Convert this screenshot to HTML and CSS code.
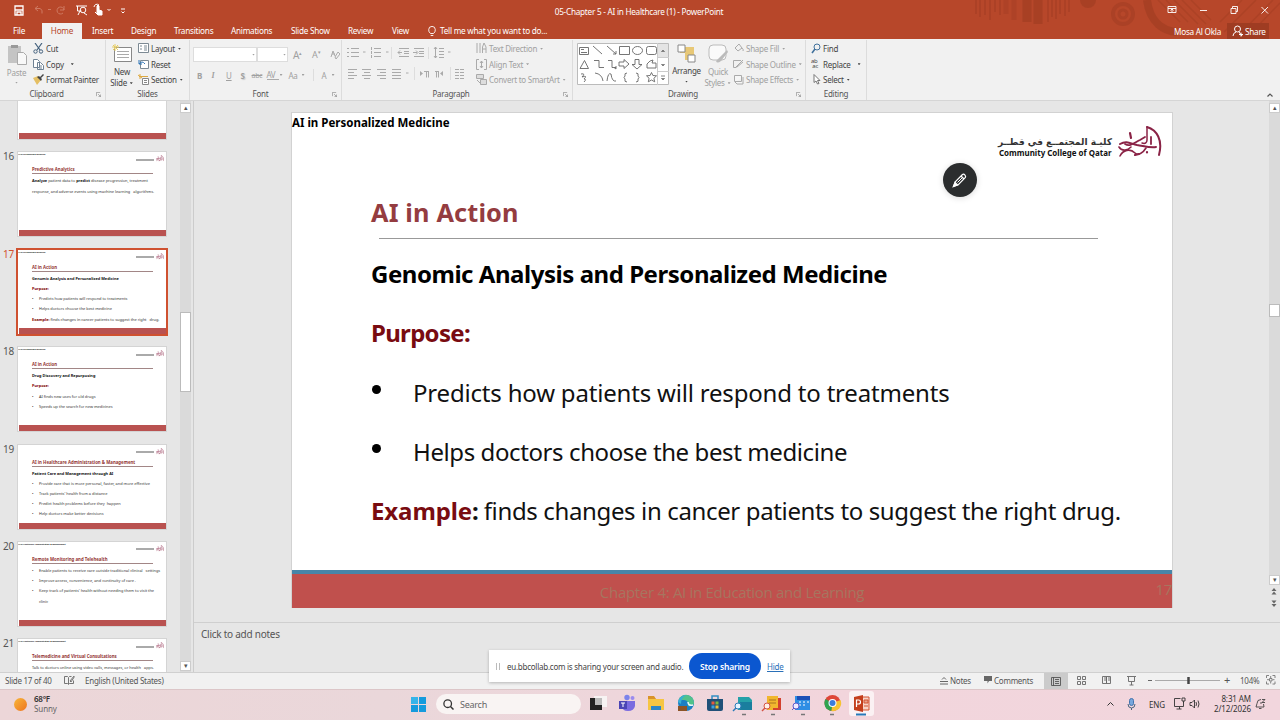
FILE: index.html
```html
<!DOCTYPE html>
<html lang="en">
<head>
  <meta charset="UTF-8">
  <meta name="viewport" content="width=device-width, initial-scale=1.0">
  <title>05-Chapter 5 - AI in Healthcare (1) - PowerPoint</title>
  <link rel="stylesheet" href="styles.css">
</head>
<body>
  <!-- shared symbols -->
  <svg class="defs" width="0" height="0">
    <symbol id="emblem" viewBox="0 0 44 36">
      <g fill="none" stroke="#8a2346" stroke-linecap="round">
        <path d="M29 2c10 3 16 13 12 28" stroke-width="2"/>
        <path d="M29 2v13c0 3-2 4-5 3" stroke-width="1.500"/>
        <path d="M2 19c7-4 11 0 17 1 7 1 13 3 19 2" stroke-width="2"/>
        <path d="M7 19c5 3 9-1 15-4l5-3M33 12v7" stroke-width="1.800"/>
        <path d="M1 22c3 5 9 3 12 0M2 31c3-6 10-8 15-3 3 3 8 0 11-5" stroke-width="1.600"/>
        <path d="M12 8l1 5M29 27v.4M17 30l4-1" stroke-width="2.200"/>
      </g>
    </symbol>
    <symbol id="launch" viewBox="0 0 6 6">
      <path d="M.5 5V.5H5M2.500 2.500l3 3M5.500 3v2.500H3" fill="none" stroke="currentColor" stroke-width=".8"/>
    </symbol>
  </svg>

  <div class="app">
    <header class="header">
      <svg class="header-art" width="360" height="39" viewBox="0 0 360 39">
        <g fill="none" stroke="#9f3c22" stroke-width="1.500">
          <path d="M56 0v14M60 0v17M65 0v15M70 0v20M75 0v12M80 0v15M128 0v22M132 0v17M136 0v19M140 0v14M145 0v16M149 0v12" opacity=".55"/>
          <path d="M86 0v14M94 0v20" stroke-width="5" opacity=".4"/>
          <path d="M107 0v22M118 0v24" stroke-width="9" opacity=".6"/>
          <circle cx="203" cy="14" r="10" stroke-width="4" opacity=".5"/>
          <circle cx="203" cy="14" r="4" stroke-width="3" opacity=".5"/>
          <path d="M227 0c3 24 18 31 30 32" stroke-width="8" opacity=".6"/>
          <path d="M238 0l22 22M246 0l22 22M254 0l24 24M262 0l24 24M271 0l20 20M315 39l38-39M325 39l35-36M304 32l32-32M300 22l22-22" opacity=".45"/>
        </g>
        <circle cx="168" cy="0" r="8" fill="#9f3c22" opacity=".6"/>
      </svg>
      <div class="titlebar">
        <svg width="130" height="20" viewBox="0 0 130 20" fill="none" stroke="#fff">
          <path d="M15 6h8v9h-8zM15 10h8M17 15v-3h4v3" stroke-width="1.300"/>
          <g stroke="#cf7a62"><path d="M38 6l-3 2.500 3 2.500M35 8.500h5q3 1 2 5M64 6v4h-4M64 10a3.500 3.500 0 1 0-1 3M48 9.500h3"/></g>
          <path d="M76 6h11M77.500 6v5h4M80 11l-2 4M84 13l3 2"/><circle cx="83" cy="10" r="2.800"/>
          <path d="M97 14V6q1-2 2 0v4l3 1v4h-4l-3-3z" fill="#fff"/><path d="M94 7a3 3 0 0 1 5-2"/>
          <path d="M107.500 9l1.500 1.500 1.500-1.500M121 9h4M121.500 11.500l1.500 1.500 1.500-1.500"/>
        </svg>
        <span class="doc-title">05-Chapter 5 - AI in Healthcare (1) - PowerPoint</span>
        <svg class="window-btns" width="112" height="20" viewBox="0 0 112 20" fill="none" stroke="#fff">
          <path d="M8 6.500h8v6H8zM8 8.500h8M12 12V9.500M10.500 10.500L12 9l1.500 1.500M40 10.500h7M71 8.500h5v5h-5zM72.500 8V6.500h5v5H76M101.500 7l6.500 6.500M108 7l-6.500 6.500" stroke-width=".9"/>
        </svg>
      </div>
      <nav class="tabs">
        <span class="tab file">File</span>
        <span class="tab active">Home</span>
        <span class="tab insert">Insert</span>
        <span class="tab design">Design</span>
        <span class="tab trans">Transitions</span>
        <span class="tab anim">Animations</span>
        <span class="tab show">Slide Show</span>
        <span class="tab review">Review</span>
        <span class="tab view">View</span>
        <span class="tab tell">
          <svg width="8" height="11" viewBox="0 0 8 11" fill="none" stroke="#fff"><path d="M2.500 7.500Q.5 6 .7 3.700a3.300 3.300 0 0 1 6.600 0Q7.500 6 5.500 7.500zM2.700 9.500h2.600" stroke-width=".9"/></svg>
          Tell me what you want to do...</span>
        <span class="user">Mosa Al Okla</span>
        <span class="share">
          <svg width="11" height="12" viewBox="0 0 11 12" fill="none" stroke="#fff"><circle cx="5.500" cy="4" r="3"/><path d="M1 11q0-3 3-4M7 7l3 4M7 9.500h4M9 7.500v4"/></svg>
          Share</span>
      </nav>
    </header>

    <section class="ribbon">
      <div class="group clipboard">
        <div class="group-body">
          <div class="big disabled paste">
            <svg width="20" height="21" viewBox="0 0 20 21"><path d="M1 2h13v17H1z" fill="#c4c4c4"/><path d="M4 1h7v3H4z" fill="#999"/><path d="M10.500 8.500h6l3 3v9h-9z" fill="#f8f8f8" stroke="#aaa"/></svg>
            <span>Paste</span><i class="caret"></i>
          </div>
          <div class="stack">
            <span class="cmd"><svg width="11" height="11" viewBox="0 0 11 11" fill="none" stroke="#44617d"><path d="M2 0l5 7M9 0L4 7" stroke-width="1.200"/><circle cx="2.500" cy="8.500" r="1.700"/><circle cx="8" cy="8.500" r="1.700"/></svg>Cut</span>
            <span class="cmd"><svg width="11" height="11" viewBox="0 0 11 11" fill="#fff" stroke="#6f8294"><path d="M.5.500h4l2 2v6h-6zM4.500 3.500h3l3 3v4h-6zM6 7h3M6 9h3"/></svg>Copy <i class="caret far"></i></span>
            <span class="cmd"><svg width="11" height="11" viewBox="0 0 11 11"><path d="M0 4l5-2 3 4-4 5z" fill="#e5bf63"/><path d="M4 3l4 4 1-2-3-3zM7 3l3-3 1 1-3 3z" fill="#444"/></svg>Format Painter</span>
          </div>
        </div>
        <div class="group-label">Clipboard<svg class="launch"><use href="#launch"/></svg></div>
      </div>

      <div class="group slides">
        <div class="group-body">
          <div class="big new-slide">
            <svg width="20" height="20" viewBox="0 0 20 20"><path d="M2.500 3.500h17v14h-17z" fill="#fff" stroke="#888"/><path d="M5 7.500h12M5 10.500h12M5 13.500h12" stroke="#aaa"/><path d="M3 0v7M0 3h7M1 1l5 5M6 1L1 6" stroke="#e7cd62"/></svg>
            <span>New</span><span>Slide <i class="caret"></i></span>
          </div>
          <div class="stack">
            <span class="cmd"><svg width="11" height="11" viewBox="0 0 11 11" fill="#fff" stroke="#7d8a94"><path d="M.5.500h10v9H.500zM2 3h2M2 6h2M6 3h3M6 5h3M6 7h3"/></svg>Layout <i class="caret"></i></span>
            <span class="cmd"><svg width="11" height="11" viewBox="0 0 11 11" fill="#fff" stroke="#7d8a94"><path d="M2.500 1.500h8v8h-8z"/><path d="M1 1v4h3M1 5q3-4 6 0" fill="none" stroke="#2e75b6"/></svg>Reset</span>
            <span class="cmd"><svg width="11" height="11" viewBox="0 0 11 11" fill="#fff" stroke="#888"><path d="M4.500 4.500h6v6h-6zM6 6.500h3M6 8.500h3"/><path d="M1 2.500h9M2 0v5M0 1l4 3" stroke="#dda941"/></svg>Section <i class="caret"></i></span>
          </div>
        </div>
        <div class="group-label">Slides</div>
      </div>

      <div class="group font">
        <div class="font-row">
          <span class="combo name"><i class="caret"></i></span><span class="combo size"><i class="caret"></i></span>
          <span class="glyph grow">A<sup>▴</sup></span><span class="glyph shrink">A<sup>▾</sup></span>
          <svg class="clear-fmt" width="10" height="11" viewBox="0 0 10 11" fill="none" stroke="#aaa"><path d="M1 8l2-6 2 5M2 5h3M5 8l3-5 2 2-4 5z"/></svg>
        </div>
        <div class="font-row second">
          <b>B</b><i class="it">I</i><u>U</u><b class="sh">S</b><s>abc</s><span class="av">AV</span><i class="caret"></i><span class="aa">Aa</span><i class="caret"></i><span class="vr"></span><span class="color-a">A</span><i class="caret"></i>
        </div>
        <div class="group-label">Font<svg class="launch"><use href="#launch"/></svg></div>
      </div>

      <div class="group paragraph">
        <div class="group-body">
          <svg class="para-icons" width="126" height="44" viewBox="0 0 126 44" fill="none" stroke="#aaa">
            <path d="M9 5.500h8M9 9.500h8M9 13.500h8M5 5.500h2M5 9.500h2M5 13.500h2M32 5.500h7M32 9.500h7M32 13.500h7M29.500 4v3M29.500 8v3M29.500 12v3"/>
            <path d="M57 5.500h10M62 8.500h5M62 10.500h5M57 13.500h10M56 9.500h4M58 7.500l-2 2 2 2M72 5.500h10M77 8.500h5M77 10.500h5M72 13.500h10M71 9.500h4M74 7.500l2 2-2 2"/>
            <path d="M97 5.500h5M97 8.500h5M97 11.500h5M97 14.500h5M93.500 4v11M92 6l1.500-2L95 6M92 13l1.500 2 1.500-2"/>
            <path d="M6 26.500h9M6 29.500h6M6 32.500h9M6 35.500h6M20 26.500h9M22 29.500h6M20 32.500h9M22 35.500h6M35 26.500h9M38 29.500h6M35 32.500h9M38 35.500h6M50 26.500h9M50 29.500h9M50 32.500h9M50 35.500h9"/>
            <path d="M113 26.500h4M118 26.500h4M113 29.500h4M118 29.500h4M113 32.500h4M118 32.500h4M113 35.500h4M118 35.500h4"/>
            <path d="M72.500 24v13M108.500 24v13M49.500 4v12M86.500 4v12" stroke="#ddd"/>
            <path d="M78 28v5l3-2.500zM101 28v5l-3-2.500z" fill="#aaa" stroke="none"/>
            <path d="M82 28.500h5M84.500 28.500v6M86.500 28.500v6M93 28.500h4M94.500 28.500v6M96.500 28.500v6"/>
            <path d="M21 9h2.500M44 9h2.500M106 9h2.500M64 30h2.500M126 30h2.500"/>
          </svg>
          <div class="stack disabled">
            <span class="cmd"><svg width="11" height="11" viewBox="0 0 11 11" fill="none" stroke="#aaa"><path d="M1 0v10M4 0v10M6.500 10V4l1.500-4 2 4v6M7 6h3"/></svg>Text Direction <i class="caret"></i></span>
            <span class="cmd"><svg width="11" height="11" viewBox="0 0 11 11" fill="none" stroke="#aaa"><path d="M3 .5H.5v10H3M8 .5h2.500v10H8M5.500 2v7M4 4l1.500-2L7 4M4 7l1.500 2L7 7"/></svg>Align Text <i class="caret"></i></span>
            <span class="cmd"><svg width="11" height="11" viewBox="0 0 11 11" fill="#ddd" stroke="#aaa"><path d="M.5.500h7v4h-7zM4.500 5.500h6v5h-6zM1 6l3 3"/></svg>Convert to SmartArt <i class="caret"></i></span>
          </div>
        </div>
        <div class="group-label">Paragraph<svg class="launch"><use href="#launch"/></svg></div>
      </div>

      <div class="group drawing">
        <div class="group-body">
          <svg class="shapes" width="92" height="42" viewBox="0 0 92 42" fill="none" stroke="#666">
            <path d="M.5.500h91v41H.500z" fill="#fff" stroke="#bbb"/>
            <path d="M81 1h10v14H81z" fill="#e4e4e4" stroke="none"/><path d="M80.500 0v42M81 14.500h11M81 28.500h11" stroke="#ccc"/>
            <path d="M2.500 4.500h9v7h-9zM4 6.500h3M4 9.500h6M16 3l9 8M30 3l9 8M39 8v3h-3M42.500 3.500h10v8h-10z" stroke-width=".9"/>
            <rect x="69.500" y="3.500" width="10" height="8" rx="2" stroke-width=".9"/>
            <ellipse cx="60.500" cy="7.500" rx="5" ry="4" stroke-width=".9"/>
            <path d="M3 25.500l4.500-8 4 8zM17 17.500h5v7h5M31 17.500h4v7h4M39 23v3l-2-1.500M42 19h5v-2.500l5 4.500-5 4.500V23h-5zM58 16.500h4v5h3l-5 4.500-5-4.500h3zM70 21l3-3 3-1-1 3h4v5h-9z" stroke-width=".9"/>
            <path d="M4 31q5-1 1 3 6-2 2 2 3 0 0 3M18 30q7 1 8 8M30 38q1-9 4-7 1 8 5 7M50 30q-3 0-2 3l-1 1.500 1 1.500q-1 3 2 3M59 30q3 0 2 3l1 1.500-1 1.500q1 3-2 3M74.500 29.500l1.400 3 3.600.3-2.600 2.500.8 3.500-3.200-1.800-3.200 1.800.8-3.500-2.600-2.500 3.600-.3z" stroke-width=".9"/>
            <path d="M84.500 8.500l1.500-1.500 1.500 1.500zM84.500 21.500l1.500 1.500 1.500-1.500zM84 33h4M84.500 35.500l1.500 1.500 1.500-1.500z" stroke-width=".8"/>
          </svg>
          <div class="big arrange">
            <svg width="20" height="19" viewBox="0 0 20 19"><path d="M3 3h14v13H8V9H3z" fill="#e8c876"/><path d="M1 1h7v7H1zM11 11h7v7h-7z" fill="#fff" stroke="#888"/></svg>
            <span>Arrange</span><i class="caret"></i>
          </div>
          <div class="big quick disabled">
            <svg width="21" height="20" viewBox="0 0 21 20"><rect x="1" y="1" width="17" height="15" rx="4" fill="#fafafa" stroke="#bbb"/><path d="M10 15l9-9 1 2-7 9q-4 3-5 0z" fill="#bbb"/></svg>
            <span>Quick</span><span>Styles <i class="caret"></i></span>
          </div>
          <div class="stack disabled">
            <span class="cmd"><svg width="11" height="11" viewBox="0 0 11 11" fill="none" stroke="#aaa"><path d="M2 5l4-4 3 4-4 3zM9 5q2 2 1 3"/></svg>Shape Fill <i class="caret"></i></span>
            <span class="cmd"><svg width="11" height="11" viewBox="0 0 11 11" fill="none" stroke="#aaa"><path d="M8 1.500H.500v7h3M3 8l7-7M4 8l6-5"/></svg>Shape Outline <i class="caret"></i></span>
            <span class="cmd"><svg width="11" height="11" viewBox="0 0 11 11" fill="#f6f6f6" stroke="#aaa"><path d="M2 8l2 2h6V3M1.500 1.500h7v6h-7z"/></svg>Shape Effects <i class="caret"></i></span>
          </div>
        </div>
        <div class="group-label">Drawing<svg class="launch"><use href="#launch"/></svg></div>
      </div>

      <div class="group editing">
        <div class="group-body">
          <div class="stack">
            <span class="cmd"><svg width="10" height="11" viewBox="0 0 10 11" fill="none" stroke="#41719c"><circle cx="6" cy="4" r="3"/><path d="M4 6L1 10" stroke-width="1.500"/></svg>Find</span>
            <span class="cmd"><span class="abac">ab<br>&nbsp;ac</span>Replace <i class="caret far"></i></span>
            <span class="cmd"><svg width="10" height="11" viewBox="0 0 10 11" fill="#fff" stroke="#777"><path d="M3 .5v8l2-1.500 1.500 3L8 9.500l-1.500-3H9z"/></svg>Select <i class="caret"></i></span>
          </div>
        </div>
        <div class="group-label">Editing</div>
      </div>
      <svg class="collapse" width="8" height="6" viewBox="0 0 8 6" fill="none" stroke="#555"><path d="M1.500 4.500L4 2l2.500 2.500" stroke-width="1.200"/></svg>
    </section>

    <main class="workspace">
      <aside class="thumbs">
        <div class="thumb-list">
          <div class="item"><span class="num"></span><div class="thumb"><div class="bar"></div></div></div>
          <div class="item"><span class="num">16</span><div class="thumb">
            <div class="mini-head"><b>AI in Personalized Medicine</b><span class="mini-logo"><i></i><svg><use href="#emblem"/></svg></span></div>
            <div class="mini-title">Predictive Analytics</div>
            <div class="mini-body"><p><b>Analyze</b> patient data to <b>predict</b> disease progression, treatment</p><p>response, and adverse events using machine learning &nbsp; algorithms.</p></div>
            <div class="bar"></div></div></div>
          <div class="item"><span class="num sel">17</span><div class="thumb selected">
            <div class="mini-head"><b>AI in Personalized Medicine</b><span class="mini-logo"><i></i><svg><use href="#emblem"/></svg></span></div>
            <div class="mini-title">AI in Action</div>
            <div class="mini-body"><p><b>Genomic Analysis and Personalized Medicine</b></p><p><b class="red">Purpose:</b></p><p class="li">Predicts how patients will respond to treatments</p><p class="li">Helps doctors choose the best medicine</p><p><b class="red">Example:</b> finds changes in cancer patients to suggest the right &nbsp; drug.</p></div>
            <div class="bar"></div></div></div>
          <div class="item"><span class="num">18</span><div class="thumb">
            <div class="mini-head"><b>AI in Personalized Medicine</b><span class="mini-logo"><i></i><svg><use href="#emblem"/></svg></span></div>
            <div class="mini-title">AI in Action</div>
            <div class="mini-body"><p><b>Drug Discovery and Repurposing</b></p><p><b class="red">Purpose:</b></p><p class="li">AI finds new uses for old drugs</p><p class="li">Speeds up the search for new medicines</p></div>
            <div class="bar"></div></div></div>
          <div class="item"><span class="num">19</span><div class="thumb">
            <div class="mini-head"><b></b><span class="mini-logo"><i></i><svg><use href="#emblem"/></svg></span></div>
            <div class="mini-title">AI in Healthcare Administration &amp; Management</div>
            <div class="mini-body"><p><b>Patient Care and Management through AI</b></p><p class="li">Provide care that is more personal, faster, and more effective</p><p class="li">Track patients' health from a distance</p><p class="li">Predict health problems before they &nbsp;happen</p><p class="li">Help doctors make better decisions</p></div>
            <div class="bar"></div></div></div>
          <div class="item"><span class="num">20</span><div class="thumb">
            <div class="mini-head"><b>AI in Healthcare Administration &amp; Management</b><span class="mini-logo"><i></i><svg><use href="#emblem"/></svg></span></div>
            <div class="mini-title">Remote Monitoring and Telehealth</div>
            <div class="mini-body"><p class="li">Enable patients to receive care outside traditional clinical &nbsp; settings</p><p class="li">Improve access, convenience, and continuity of care .</p><p class="li">Keep track of patients' health without needing them to visit the</p><p class="li cont">clinic</p></div>
            <div class="bar"></div></div></div>
          <div class="item"><span class="num">21</span><div class="thumb">
            <div class="mini-head"><b>AI in Healthcare Administration &amp; Management</b><span class="mini-logo"><i></i><svg><use href="#emblem"/></svg></span></div>
            <div class="mini-title">Telemedicine and Virtual Consultations</div>
            <div class="mini-body"><p>Talk to doctors online using video calls, messages, or health &nbsp; apps.</p></div>
            <div class="bar"></div></div></div>
        </div>
        <div class="scrollbar">
          <span class="sb-btn">▴</span><span class="sb-thumb"></span><span class="sb-btn last">▾</span>
        </div>
      </aside>

      <section class="editor">
        <div class="canvas">
          <article class="slide">
            <div class="slide-head">
              <span class="corner">AI in Personalized Medicine</span>
              <div class="logo">
                <div class="logo-text"><span class="ar" lang="ar" dir="rtl">كليـة المجتمــع في قطــر</span><span class="en">Community College of Qatar</span></div>
                <svg width="44" height="36"><use href="#emblem"/></svg>
              </div>
            </div>
            <h1>AI in Action</h1>
            <div class="slide-body">
              <p class="topic">Genomic Analysis and Personalized Medicine</p>
              <p class="purpose">Purpose:</p>
              <p class="bullet one">Predicts how patients will respond to treatments</p>
              <p class="bullet two">Helps doctors choose the best medicine</p>
              <p class="example"><b>Example</b><strong>:</strong> finds changes in cancer patients to suggest the right drug.</p>
            </div>
            <footer class="slide-foot"><span>Chapter 4: AI in Education and Learning</span><span class="page">17</span></footer>
          </article>
          <div class="scrollbar main-sb">
            <span class="sb-btn">▴</span><span class="sb-thumb"></span><span class="sb-btn last">▾</span>
            <svg width="10" height="28" viewBox="0 0 10 28" fill="#666"><path d="M5 3L2.500 6h5zM5 6.500L2.500 9.500h5zM5 22l-2.500-3h5zM5 18.500l-2.500-3h5z"/></svg>
          </div>
        </div>
        <div class="notes">Click to add notes</div>
      </section>
      <button class="pen" aria-label="Pen"><svg width="16" height="16" viewBox="0 0 16 16" fill="none" stroke="#fff"><path d="M1.500 14.500l2-5L10.500 2.500q1-1 2.300.4t.6 2.500L6.500 12.500z" stroke-width="1.200"/><path d="M1.500 14.500l1.500-4 2.500 2.500zM9 4l3 3" fill="#fff" stroke-width="1.300"/><path d="M5.500 10.500L10 6"/></svg></button>
    </main>

    <div class="statusbar">
      <span class="count">Slide 17 of 40</span>
      <svg class="spell" width="11" height="10" viewBox="0 0 11 10" fill="none" stroke="#666"><path d="M.5 1.500h3l1 1 1-1h2M.5 1.500v7h3l1 1 1-1h4v-3M4.500 3v6M6 6l4-5M6 6l1 1 3.500-5.500" stroke-width=".9"/></svg>
      <span class="lang">English (United States)</span>
      <span class="notes-btn"><svg width="8" height="9" viewBox="0 0 8 9" fill="none" stroke="#666"><path d="M0 5.500h8M0 8h8M2 3.500l2-2 2 2"/></svg>Notes</span>
      <span class="comments-btn"><svg width="8" height="8" viewBox="0 0 8 8" fill="#666"><path d="M0 0h8v5H5L3.500 7.500V5H0z"/></svg>Comments</span>
      <span class="view-on"><svg width="10" height="9" viewBox="0 0 10 9" fill="none" stroke="#555"><path d="M.5.500h9v8h-9zM2.500 0v9M4 2.500h4M4 4.500h4M4 6.500h4" stroke-width=".9"/></svg></span>
      <svg width="152" height="15" viewBox="0 0 152 15" fill="none" stroke="#666">
        <path d="M9.500 3.500h3v3h-3zM14.500 3.500h3v3h-3zM9.500 8.500h3v3h-3zM14.500 8.500h3v3h-3zM34.500 3.500h4v7h-4zM38.500 3.500h4v7h-4zM36 5h2M36 7h2M40 5h2M40 7h2M59 3.500h9M60.500 4v4.500h6V4M63.500 9v3M61.500 12h4" stroke-width=".9"/>
        <path d="M80 7.500h4"/><path d="M87 7.500h65" stroke="#aaa"/><path d="M120.500 4v7" stroke="#444" stroke-width="2.500"/>
      </svg>
      <span class="plus">+</span>
      <span class="zoom">104%</span>
      <svg width="10" height="10" viewBox="0 0 10 10" fill="none" stroke="#777"><path d="M.5 3V.5H3M6.500.500H9V3M9 6.500V9H6.500M3 9H.5V6.500M4.700 1v2M4.700 6.500v2M1 4.700h2M6.500 4.700h2M3.500 3.500h2.500v2.500H3.500z" stroke-width=".9"/></svg>
    </div>

    <footer class="taskbar">
      <span class="sun"></span>
      <div class="weather"><b>68°F</b><span>Sunny</span></div>
      <div class="dock">
        <svg class="win" width="17" height="17" viewBox="0 0 17 17"><path d="M1 1h7v7H1zM9 1h7v7H9zM1 9h7v7H1zM9 9h7v7H9z" fill="#159bdd"/><path d="M1 1h7v7H1z" fill="#35b4e9"/></svg>
        <div class="search"><svg width="11" height="11" viewBox="0 0 11 11" fill="none" stroke="#333"><circle cx="4.700" cy="4.700" r="3.800" stroke-width="1.300"/><path d="M7.500 7.500l3 3" stroke-width="1.500"/></svg>Search</div>
        <svg class="apps" width="286" height="30" viewBox="0 0 286 30">
          <!-- task view -->
          <path d="M5 7h13v11H5z" fill="#f7f3f3"/><path d="M1 9h5v7h7v5H1z" fill="#222"/><path d="M6 9h7v7H6z" fill="#bbb"/>
          <!-- teams -->
          <circle cx="38" cy="8.500" r="2.700" fill="#7b83eb"/><circle cx="43.500" cy="9" r="2" fill="#9b8bef"/><path d="M34 12h12v5q-1 5-7 5t-5-4z" fill="#7a6be0"/><path d="M30 12h8v8h-8z" fill="#4b45b5"/><path d="M32 14h4M34 14v4" stroke="#fff"/>
          <!-- explorer -->
          <path d="M59 8h6l2 2h8v11H59z" fill="#f6c544"/><path d="M59 7h6l2 3h-8z" fill="#d9932a"/><path d="M62 17h10v4H62z" fill="#2d86c9"/>
          <!-- edge -->
          <circle cx="97" cy="14" r="8" fill="#1b7fc4"/><path d="M89.500 11a8 8 0 0 1 15.500 3q-1 4-6 3 1-6-4-6-4 0-5.500 0z" fill="#52c28b"/><path d="M89 13q2-7 9-7-6 2-6 9z" fill="#36b0d8"/><path d="M89 17h9v5H89z" fill="#8c5427"/><path d="M99 13q0 4 5 3" stroke="#e9f7fa" stroke-width="1.500" fill="none"/>
          <!-- store -->
          <path d="M118 10h16v10q0 2-2 2h-12q-2 0-2-2z" fill="#205078"/><path d="M123 10V7h6v3" fill="none" stroke="#338fc4" stroke-width="1.500"/><path d="M122.500 12.500h3v3h-3z" fill="#e85a3b"/><path d="M126.500 12.500h3v3h-3z" fill="#7bb942"/><path d="M122.500 16.500h3v3h-3z" fill="#3aa1dd"/><path d="M126.500 16.500h3v3h-3z" fill="#f0c23b"/>
          <!-- magnified shortcuts -->
          <path d="M149 8h11l3 3v10h-14z" fill="#25a1a9"/><path d="M151 13h12v8h-12z" fill="#1a7e9e"/><circle cx="149" cy="17" r="3" fill="#e4f4ff" stroke="#287bb8"/><path d="M147 19l-3 3" stroke="#287bb8" stroke-width="1.500"/>
          <path d="M178 7h11v14h-11z" fill="#f1b62e"/><path d="M189 9h3v12h-8v-2h5z" fill="#d3402e"/><path d="M180 11h7M180 14h7" stroke="#aa731e"/><circle cx="178" cy="17" r="3" fill="#fff0e8" stroke="#d45344"/><path d="M176 19l-3 3" stroke="#d45344" stroke-width="1.500"/>
          <path d="M206 7h15v14h-15z" fill="#2e8ee4"/><path d="M208 7h13v4h-13z" fill="#1c50b6"/><path d="M210 13h2M214 13h2M218 13h2M210 16h2M214 16h2" stroke="#fff"/><circle cx="207" cy="17" r="3" fill="#eeeaff" stroke="#5d5acb"/><path d="M205 19l-2 2" stroke="#5d5acb"/>
          <!-- chrome -->
          <circle cx="243.500" cy="14" r="8" fill="#de4537"/><path d="M243.500 14l-7-4a8 8 0 0 0 6 12z" fill="#30a350"/><path d="M243.500 14l8-3a8 8 0 0 1-9 11z" fill="#f6c331"/><circle cx="243.500" cy="14" r="4" fill="#fff"/><circle cx="243.500" cy="14" r="3" fill="#3c7ddc"/>
          <!-- powerpoint -->
          <rect x="260" y="2" width="25" height="25" rx="3" fill="#fbf1f3"/><path d="M271 8h9v13h-9z" fill="#f7d3c8" stroke="#d35230"/><path d="M275 11h4v3h-4zM275 17h4" stroke="#d35230" fill="#e9a18d"/><path d="M265 8l9-2v17l-9-2z" fill="#c43e1c"/><path d="M267.500 18v-7h2q2 0 2 2t-2 2h-2" fill="none" stroke="#fff" stroke-width="1.200"/>
          <path d="M153 25.500h4M182 25.500h4M212 25.500h4M241 25.500h4" stroke="#777" stroke-width="1.500"/><path d="M267 25.500h10" stroke="#2878b8" stroke-width="2"/>
        </svg>
      </div>
      <div class="tray">
        <svg width="36" height="16" viewBox="0 0 36 16" fill="none" stroke="#333"><path d="M1.500 9.500L4.500 6.500l3 3"/><rect x="23.500" y="2.500" width="4" height="7" rx="2" fill="#77a6dc" stroke="#4173ad"/><path d="M22 8q0 4 3.500 4T29 8M25.500 12v2" stroke="#4b647e"/></svg>
        <span class="eng">ENG</span>
        <svg width="28" height="14" viewBox="0 0 28 14" fill="none" stroke="#333"><path d="M7.500 1.500h-6v8h9V5M3.500 12h5M6.500 10v2M9 1h3v3H9zM10.500 4v2M17 5.500h2l2.500-2.500v8L19 8.500h-2zM23 5q1 2 0 4M25 3.500q2 3.500 0 7" stroke-width=".9"/></svg>
        <div class="clock"><span>8:31 AM</span><span>2/12/2026</span></div>
        <svg width="11" height="12" viewBox="0 0 11 12" fill="none" stroke="#444"><path d="M6 1.500q-4 0-4 4L1 9h8L8.500 6M4 10.500h2.500M7 1.500h3l-3 3h3M5 5h2" stroke-width=".9"/></svg>
      </div>
    </footer>

    <div class="share-bar">
      <span class="grip"></span>
      <span class="msg">eu.bbcollab.com is sharing your screen and audio.</span>
      <button class="stop">Stop sharing</button>
      <a class="hide">Hide</a>
    </div>
  </div>
</body>
</html>
```

FILE: styles.css
```css
* {
  box-sizing: border-box;
}
body {
  margin: 0;
  font-family: "Noto Sans", "Open Sans", sans-serif;
  font-size: 8px;
  letter-spacing: -0.25px;
  color: #444;
}
p, h1 {
  margin: 0;
}
svg {
  flex: none;
}
.defs {
  position: absolute;
}
.app {
  position: relative;
  width: 1280px;
  height: 720px;
  display: flex;
  flex-direction: column;
  overflow: hidden;
  background: #e6e6e6;
  white-space: nowrap;
}

/* header */
.header {
  position: relative;
  height: 39px;
  background: #b7472a;
  color: #fff;
}
.header-art {
  position: absolute;
  right: 0;
  top: 0;
}
.titlebar {
  position: relative;
  height: 23px;
  display: flex;
  align-items: center;
  justify-content: space-between;
}
.titlebar > svg {
  margin-top: -3px;
}
.titlebar > svg:first-child {
  margin-right: -12px;
}
.doc-title {
  font-size: 8.2px;
}
.titlebar .window-btns {
  margin-right: 8px;
}
.tabs {
  position: relative;
  height: 16px;
  display: flex;
  align-items: center;
  font-size: 8.2px;
}
.tab {
  flex: none;
  line-height: 16px;
}
.file { width: 42px; padding-left: 13px; }
.active {
  width: 40px;
  text-align: center;
  background: #f1f1f1;
  color: #b7472a;
}
.insert { width: 49px; padding-left: 10px; }
.design { width: 43px; }
.trans { width: 57px; }
.anim { width: 60px; }
.show { width: 57px; }
.review { width: 44px; }
.view { width: 36px; }
.tell {
  display: flex;
  align-items: center;
  gap: 4px;
}
.user {
  margin-left: auto;
  width: 53px;
}
.share {
  display: flex;
  align-items: center;
  gap: 2px;
  width: 42px;
  height: 16px;
  margin-right: 11px;
  padding-left: 5px;
  background: #9f3c22;
}

/* ribbon */
.ribbon {
  position: relative;
  height: 62px;
  display: flex;
  background: #f1f1f1;
  border-bottom: 1px solid #d5d5d5;
}
.group {
  flex: none;
  height: 60px;
  margin-top: 1px;
  display: flex;
  flex-direction: column;
  border-right: 1px solid #dcdcdc;
}
.clipboard { width: 106px; }
.slides { width: 84px; }
.font { width: 152px; }
.paragraph { width: 231px; }
.drawing { width: 233px; }
.editing { width: 61px; }
.group-body {
  height: 48px;
  padding-top: 1px;
  display: flex;
}
.group-label {
  position: relative;
  height: 12px;
  line-height: 12px;
  text-align: center;
  color: #555;
  margin-top: auto;
}
.clipboard .group-label { padding-right: 12px; }
.paragraph .group-label { padding-right: 12px; }
.drawing .group-label { padding-right: 12px; }
.font .group-label { padding-right: 10px; }
.launch {
  position: absolute;
  right: 4px;
  top: 4px;
  width: 5px;
  height: 5px;
  color: #888;
}
.stack {
  display: flex;
  flex-direction: column;
}
.cmd {
  height: 15.5px;
  display: flex;
  align-items: center;
  gap: 2px;
}
.caret {
  display: inline-block;
  width: 3px;
  height: 2px;
  margin: 0 1px;
  vertical-align: middle;
  background: currentColor;
  clip-path: polygon(0 0, 100% 0, 50% 100%);
}
.caret.far {
  margin-left: 5px;
}
.disabled {
  color: #a0a0a0;
}
.big {
  display: flex;
  flex-direction: column;
  align-items: center;
  line-height: 10.500px;
}
.big svg {
  margin: 3px 0 3px;
}
.paste { width: 33px; }
.paste .caret { margin-top: 3px; }
.new-slide { width: 32px; }
.arrange { width: 34px; padding-left: 1px; }
.arrange .caret { margin-top: 4px; }
.quick { width: 30px; }
.font-row {
  display: flex;
  align-items: center;
  height: 17px;
  padding-left: 3px;
  margin-top: 6px;
  color: #a0a0a0;
}
.font-row.second {
  padding-left: 7px;
  height: 18px;
  margin-top: 3px;
}
.combo {
  height: 15px;
  background: #fff;
  border: 1px solid #ddd;
  display: flex;
  align-items: center;
  justify-content: flex-end;
}
.combo.name { width: 64px; }
.combo.size { width: 31px; }
.glyph {
  font-size: 10px;
  width: 15px;
  margin-left: 5px;
  margin-right: -4px;
}
.glyph sup {
  font-size: 5px;
}
.shrink { font-size: 9px; margin-left: 8px; }
.clear-fmt { margin-left: 7px; }
.second > * { flex: none; }
.second b, .second u, .it { width: 14.500px; }
.second .sh { width: 11px; text-shadow: 1px 1px 1px #ccc; }
.it { font-family: "Liberation Serif", serif; font-weight: bold; }
.second s { width: 15px; font-size: 7px; }
.second .av { width: 12px; font-size: 8px; letter-spacing: -0.5px; border-bottom: 1px solid #aaa; line-height: 9px; }
.second .aa { width: 12px; margin-left: 5px; }
.vr { width: 1px; height: 12px; background: #ddd; margin: 0 8px 0 7px; }
.color-a { width: 9px; }
.para-icons { margin-top: 2px; }
.paragraph .group-body { gap: 8px; }
.drawing .group-body { padding-left: 4px; }
.shapes { margin-top: 2px; }
.editing .cmd { padding-left: 5px; }
.abac {
  width: 10px;
  font-size: 6px;
  line-height: 5.500px;
}
.collapse {
  position: absolute;
  right: 6px;
  bottom: 2px;
}

/* slide list */
.workspace {
  position: relative;
  height: 571px;
  display: flex;
}
.thumbs {
  width: 194px;
  display: flex;
  border-right: 1px solid #ccc;
}
.thumb-list {
  width: 180px;
  height: 571px;
  overflow: hidden;
}
.thumb-list .item:first-child {
  margin-top: -46px;
}
.item {
  display: flex;
  height: 84px;
  margin-bottom: 13.400px;
}
.num {
  width: 18px;
  padding-left: 3px;
  font-size: 10px;
  line-height: 8px;
  color: #555;
}
.num.sel {
  color: #d35230;
}
.thumb {
  position: relative;
  width: 148px;
  height: 84px;
  display: flex;
  flex-direction: column;
  overflow: hidden;
  background: #fff;
  font-size: 3.9px;
  letter-spacing: 0;
  outline: 1px solid #d4d4d4;
}
.selected {
  outline: 2px solid #cf5130;
}
.mini-head {
  height: 13px;
  display: flex;
  justify-content: space-between;
  line-height: 5px;
  font-size: 2px;
  color: #111;
  padding-right: 2px;
}
.mini-logo {
  display: flex;
  align-items: center;
  gap: 2px;
}
.mini-logo i {
  width: 18px;
  height: 2px;
  border: solid #aaa;
  border-width: 1px 0;
  margin-top: 2px;
}
.mini-logo svg {
  width: 8px;
  height: 7px;
}
.mini-title {
  height: 9px;
  width: 121px;
  margin-left: 14px;
  line-height: 8px;
  font-size: 4.350px;
  font-weight: bold;
  color: #943634;
  border-bottom: 1px solid #a28686;
}
.mini-body {
  padding: 2px 0 0 14px;
  line-height: 10.200px;
  color: #333;
}
.mini-body b {
  color: #111;
}
.mini-body .red {
  color: #800000;
}
.li::before {
  content: "•";
  display: inline-block;
  width: 7px;
}
.li.cont::before {
  content: "";
}
.bar {
  height: 6px;
  margin: auto 0 0 1px;
  background: #b95250;
}
.scrollbar {
  width: 11px;
  padding: 2px 0 1px;
  display: flex;
  flex-direction: column;
  background: #dadada;
}
.sb-btn {
  height: 10px;
  border: 1px solid #ccc;
  background: #fff;
  color: #555;
  font-size: 7px;
  line-height: 8px;
  text-align: center;
}
.sb-btn.last {
  margin-top: auto;
}
.sb-thumb {
  height: 80px;
  margin-top: 199px;
  background: #fff;
  border: 1px solid #bbb;
}

/* slide editor */
.editor {
  flex: 1;
  display: flex;
  flex-direction: column;
}
.canvas {
  height: 522px;
  display: flex;
  justify-content: space-between;
  border-bottom: 1px solid #cfcfcf;
}
.slide {
  width: 882px;
  height: 496px;
  margin: 11px 0 0 97px;
  display: flex;
  flex-direction: column;
  background: #fff;
  border: 1px solid #d2d2d2;
  border-bottom: 0;
  color: #111;
}
.slide-head {
  height: 71px;
  display: flex;
  justify-content: space-between;
}
.corner {
  font-size: 11.5px;
  font-weight: bold;
  line-height: 20px;
  letter-spacing: 0;
  color: #000;
}
.logo {
  display: flex;
  gap: 6px;
  padding: 12px 10px 0 0;
}
.logo-text {
  width: 113px;
  padding-top: 10px;
  display: flex;
  flex-direction: column;
  letter-spacing: 0;
}
.logo .ar {
  font-family: "DejaVu Sans", sans-serif;
  font-size: 9.1px;
  font-weight: bold;
  line-height: 14px;
  color: #333;
}
.logo .en {
  font-size: 7.950px;
  font-weight: bold;
  line-height: 9px;
}
.slide h1 {
  height: 55px;
  width: 719px;
  margin-left: 87px;
  text-indent: -8px;
  line-height: 56px;
  font-size: 25.3px;
  letter-spacing: 0.15px;
  color: #943c40;
  border-bottom: 1px solid #999;
}
.slide-body {
  padding: 5px 0 0 79px;
  font-size: 24px;
  line-height: 59.300px;
}
.topic, .purpose {
  font-weight: bold;
  color: #000;
}
.topic { letter-spacing: -0.46px; }
.purpose { letter-spacing: -0.7px; }
.one { letter-spacing: -0.19px; }
.two { letter-spacing: -0.4px; }
.example { letter-spacing: -0.36px; }
.example b { letter-spacing: -0.1px; }
.example strong { letter-spacing: -1px; }
.purpose, .example b {
  color: #790b10;
}
.bullet {
  display: flex;
  align-items: center;
}
.bullet::before {
  content: "";
  width: 9px;
  height: 9px;
  margin: -6px 32px 0 1px;
  border-radius: 50%;
  background: #000;
}
.slide-foot {
  height: 38px;
  margin-top: auto;
  padding-top: 2px;
  display: flex;
  justify-content: center;
  position: relative;
  background: #c0504d;
  border-top: 4px solid #4785a8;
  font-family: "Open Sans", sans-serif;
  font-size: 15px;
  line-height: 32px;
  letter-spacing: -0.3px;
  color: #a7755f;
}
.page {
  position: absolute;
  right: 0;
  top: -1px;
}
.main-sb {
  width: 11px;
}
.main-sb .sb-thumb {
  height: 13px;
  margin-top: 191px;
}
.main-sb svg {
  margin-bottom: 8px;
}
.main-sb {
  margin-bottom: 0;
  background: linear-gradient(#dadada 484px, #e6e6e6 484px);
}
.notes {
  height: 49px;
  padding: 4px 0 0 7px;
  font-size: 10px;
  line-height: 14px;
  color: #555;
}
.pen {
  position: absolute;
  left: 943px;
  top: 62px;
  width: 34px;
  height: 34px;
  padding: 0;
  border: 0;
  border-radius: 50%;
  display: flex;
  align-items: center;
  justify-content: center;
  background: #2b2d2e;
  box-shadow: 0 1px 6px rgba(0, 0, 0, 0.15);
}

/* status bar */
.statusbar {
  height: 17px;
  display: flex;
  align-items: center;
  padding-bottom: 2px;
  background: #f1f1f1;
  border-top: 1px solid #d0d0d0;
  color: #555;
}
.count { width: 58px; padding-left: 5px; }
.spell { margin: 0 10px 0 6px; }
.lang { width: 100px; }
.notes-btn, .comments-btn {
  display: flex;
  align-items: center;
  gap: 2px;
}
.notes-btn { margin-left: auto; width: 44px; }
.comments-btn { width: 60px; }
.view-on {
  width: 24px;
  height: 16px;
  margin-bottom: -2px;
  display: flex;
  align-items: center;
  justify-content: center;
  background: #cbcbcb;
}
.plus { width: 20px; padding-left: 4px; font-size: 11px; line-height: 14px; }
.zoom { width: 26px; }
.statusbar > svg:last-child { margin-right: 4px; }

/* taskbar */
.taskbar {
  position: relative;
  height: 31px;
  display: flex;
  align-items: center;
  padding-bottom: 2px;
  background: linear-gradient(90deg, #ecd6d8, #ead7da 30%, #f2d5dc 65%, #f2d6dd);
  border-top: 1px solid #dcc6c8;
}
.sun {
  width: 13px;
  height: 13px;
  margin: 0 7px 0 14px;
  border-radius: 50%;
  background: linear-gradient(135deg, #f8b739, #ee7420);
}
.weather {
  display: flex;
  flex-direction: column;
  line-height: 10.500px;
}
.weather b { font-weight: 600; color: #333; }
.weather span { color: #666; letter-spacing: -0.1px; }
.dock {
  position: absolute;
  left: 410px;
  top: -1px;
  display: flex;
  align-items: center;
}
.search {
  display: flex;
  align-items: center;
  gap: 6px;
  width: 145px;
  height: 20px;
  margin: 0 8px 0 9px;
  padding-left: 7px;
  border-radius: 10px;
  background: #f9f4f3;
  font-size: 9px;
  color: #666;
}
.tray {
  margin-left: auto;
  display: flex;
  align-items: center;
  color: #333;
}
.eng { width: 31px; padding-left: 7px; letter-spacing: -0.1px; }
.clock {
  width: 50px;
  display: flex;
  flex-direction: column;
  text-align: right;
  line-height: 10.500px;
  letter-spacing: -0.1px;
}
.tray > svg:last-child { margin: 0 14px 0 4px; }

/* screen share notice */
.share-bar {
  position: absolute;
  left: 489px;
  top: 650px;
  width: 301px;
  height: 32px;
  display: flex;
  align-items: center;
  background: #fff;
  box-shadow: 0 1px 3px rgba(0, 0, 0, 0.25);
}
.grip {
  width: 4px;
  height: 7px;
  margin: 0 7px;
  border: solid #bbb;
  border-width: 0 1px;
}
.msg {
  width: 182px;
}
.stop {
  width: 72px;
  height: 26px;
  padding: 0;
  border: 0;
  border-radius: 13px;
  background: #0b57d0;
  color: #fff;
  font-family: inherit;
  font-size: 8.500px;
  letter-spacing: -0.2px;
  font-weight: 600;
}
.hide {
  margin-left: 6px;
  color: #2a70b8;
  text-decoration: underline;
}
```
